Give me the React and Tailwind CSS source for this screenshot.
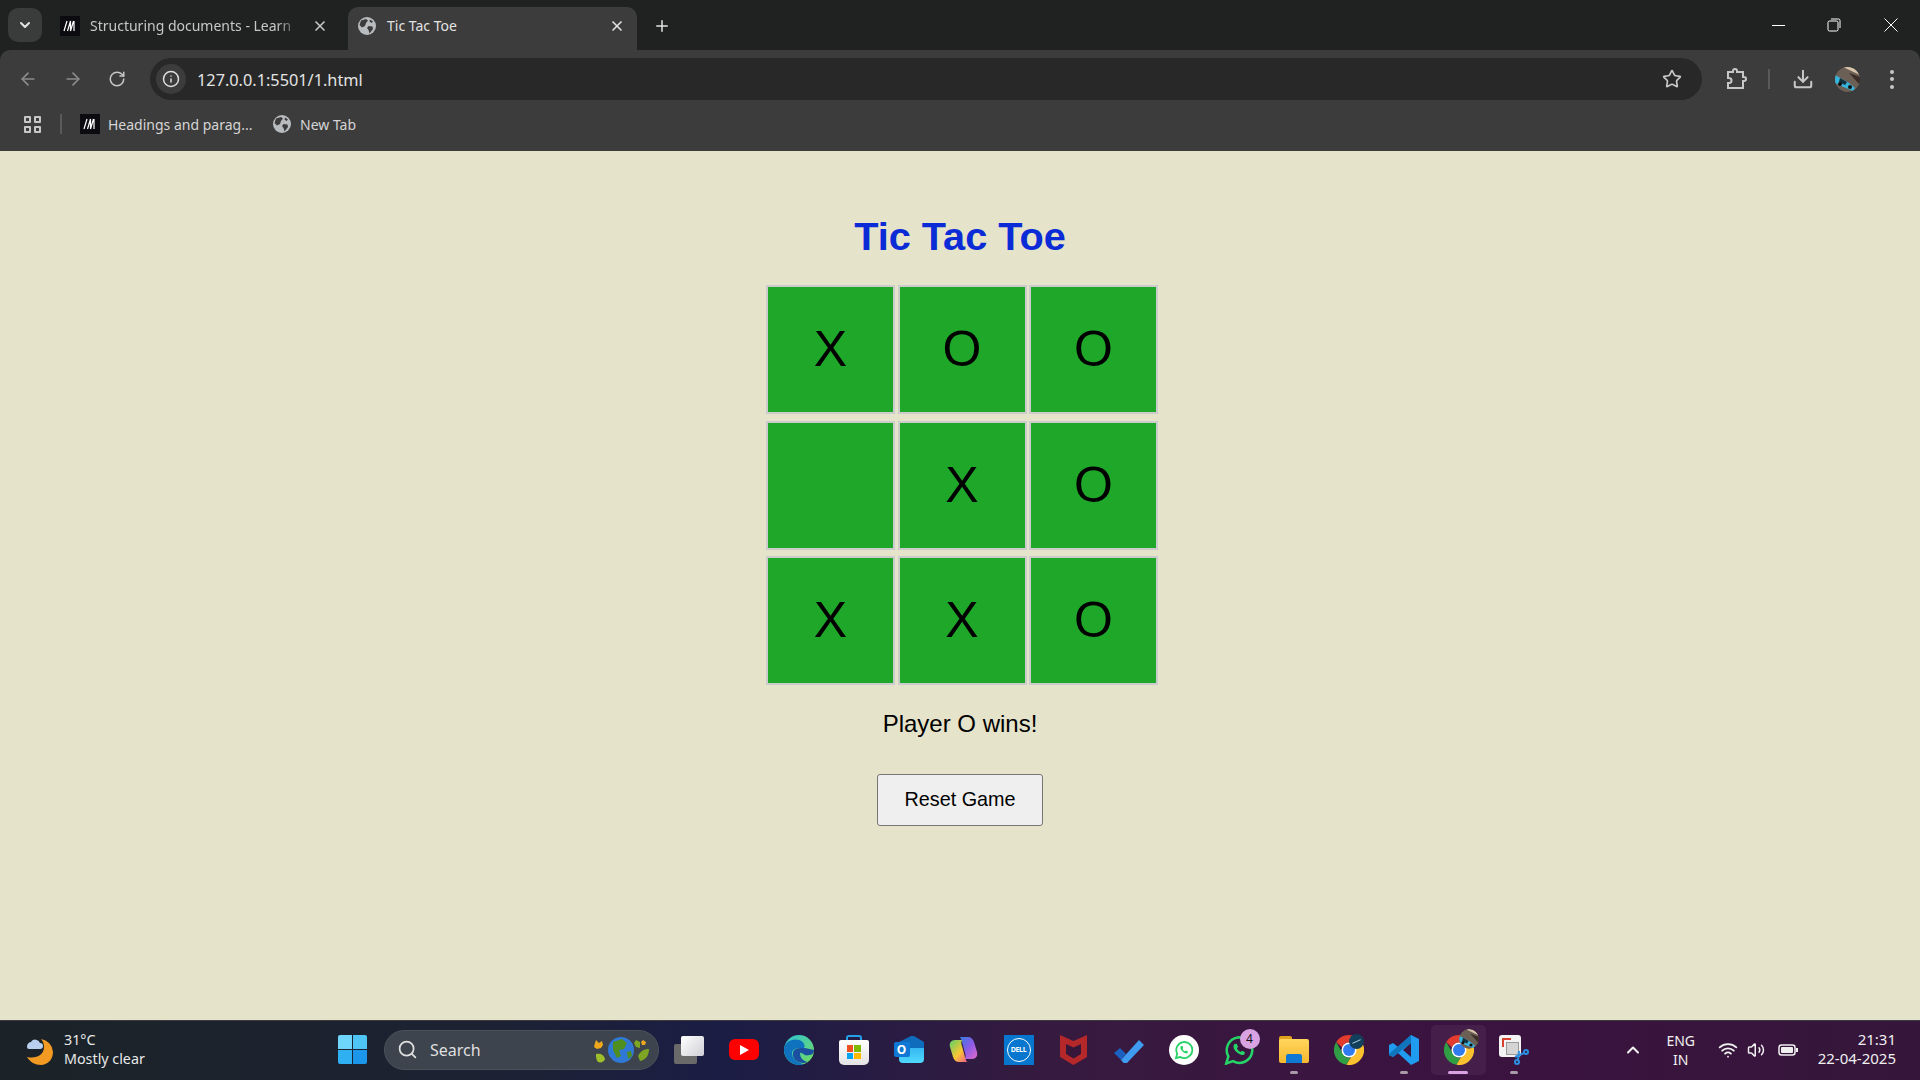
import React from 'react';
import { ArrowLeft, ArrowRight, RotateCw, Info, Star, Download, ChevronDown, ChevronUp, Plus, X, Search, Wifi, Volume2 } from 'lucide-react';

const uiFont = { fontFamily: '"Noto Sans", sans-serif' };

// favicon for mdn tabs
function MdnIcon() {
  return (
    <div className="w-[20px] h-[20px] bg-[#0b0b10] flex items-center justify-center shrink-0">
      <svg width="14" height="12" viewBox="0 0 14 12" fill="none" stroke="#fff" strokeWidth="1.2">
        <path d="M1 11 4 1M4.5 11 7.5 1V11M7.5 11 10.5 1M11 11V1" />
      </svg>
    </div>
  );
}

function GlobeIcon({ size = 18 }) {
  return (
    <svg width={size} height={size} viewBox="0 0 18 18" className="shrink-0">
      <circle cx="9" cy="9" r="9" fill="#b9bcbf" />
      <path d="M3 3.5 8 2l2 1.5-2 2.5-1 3-3 1.5-2.5-2.5zM10.5 9l4 .5.5 2.5-3.5 4.5-1-3.5-1.5-2zM12 2.5l3 2-1.5 1.5-2-1.5z" fill="#3c3c3c" />
    </svg>
  );
}

function ChromeIcon({ children }) {
  return (
    <div className="relative w-[30px] h-[30px]">
      <svg width="30" height="30" viewBox="0 0 30 30">
        <path d="M15 0a15 15 0 0 1 13 7.5H15a7.5 7.5 0 0 0-7 5L2.2 7A15 15 0 0 1 15 0z" fill="#e33b2e" />
        <path d="M2.2 7l6.500 11.500a7.500 7.500 0 0 0 8 4L12.500 29.800A15 15 0 0 1 2.200 7z" fill="#2f9e44" />
        <path d="M28 7.500A15 15 0 0 1 12.500 29.800l6.300-10.800A7.500 7.500 0 0 0 20 9z" fill="#fbc02d" />
        <circle cx="15" cy="15" r="7.500" fill="#fff" />
        <circle cx="15" cy="15" r="6" fill="#2f7bf0" />
      </svg>
      {children}
    </div>
  );
}

function AvatarPhoto({ size = 25 }) {
  return (
    <svg width={size} height={size} viewBox="0 0 25 25">
      <clipPath id={`av${size}`}><circle cx="12.500" cy="12.500" r="12.500" /></clipPath>
      <g clipPath={`url(#av${size})`}>
        <rect width="25" height="25" fill="#6c5f55" />
        <path d="M8 0h17v8z" fill="#d8c5ac" />
        <path d="M14 6l11 4v8z" fill="#3b2d28" />
        <path d="M0 8l14 8 6 5-2 3-12-5-6-3z" fill="#37b4dc" />
        <path d="M5 11l7 4-2 3-6-3z" fill="#15303d" />
        <circle cx="15" cy="20" r="2" fill="#111" />
        <circle cx="5" cy="17" r="2" fill="#111" />
      </g>
    </svg>
  );
}

function Dock({ children, dot, active }) {
  return (
    <div className={`relative w-[55px] h-[50px] flex items-center justify-center rounded-[5px] ${active ? 'bg-white/5' : ''}`}>
      {children}
      {dot && <div className="absolute bottom-[1px] left-[24px] w-[8px] h-[3px] rounded-full bg-[#a89aa8]" />}
      {active && <div className="absolute bottom-[1px] left-[17px] w-[20px] h-[3px] rounded-full bg-[#d9a3e3]" />}
    </div>
  );
}

const boardCells = ['X', 'O', 'O', '', 'X', 'O', 'X', 'X', 'O'];

export default function App() {
  return (
    <div className="w-[1920px] h-[1080px] overflow-hidden flex flex-col bg-[#202222]" style={uiFont}>
      {/* tab strip */}
      <div className="h-[50px] flex items-end shrink-0 text-[14px] text-[#e3e3e3]">
        <div className="w-[34px] h-[34px] ml-[8px] mb-[8px] rounded-[10px] bg-[#3a3b3b] flex items-center justify-center">
          <ChevronDown size={16} strokeWidth={3} />
        </div>
        <div className="w-[306px] h-[42px] flex items-center pl-[18px] pb-[7px]">
          <MdnIcon />
          <span className="ml-[10px] w-[212px] whitespace-nowrap text-[#c7c7c7] [mask-image:linear-gradient(90deg,#000_88%,transparent_100%)] text-clip overflow-x-clip">Structuring documents - Learn</span>
          <X size={16} strokeWidth={2.500} className="ml-[10px] text-[#c7c7c7]" />
        </div>
        <div className="relative w-[289px] h-[43px] rounded-t-[10px] bg-[#3c3c3c] flex items-center pl-[10px] pb-[6px]">
          <GlobeIcon />
          <span className="ml-[11px]">Tic Tac Toe</span>
          <X size={16} strokeWidth={2.500} className="ml-auto mr-[12px]" />
        </div>
        <div className="h-[43px] flex items-center ml-[16px] pb-[6px]">
          <Plus size={18} strokeWidth={2} />
        </div>
        <div className="ml-auto h-[50px] flex items-center">
          <div className="w-[56px] flex justify-center"><div className="w-[13px] h-[1px] bg-white" /></div>
          <div className="w-[56px] flex justify-center">
            <svg width="14" height="14" viewBox="0 0 14 14" fill="none" stroke="#fff"><rect x="1" y="3" width="10" height="10" rx="1.500" /><path d="M4 1h7.500A1.500 1.500 0 0 1 13 2.500V10" /></svg>
          </div>
          <div className="w-[58px] flex justify-center">
            <svg width="14" height="14" viewBox="0 0 14 14" stroke="#fff"><path d="M.5.5l13 13M13.500.5l-13 13" /></svg>
          </div>
        </div>
      </div>

      {/* address bar */}
      <div className="shrink-0 bg-[#3c3c3c] rounded-t-[10px]">
        <div className="h-[58px] flex items-center">
          <div className="w-[56px] flex justify-center text-[#8a8b8b]"><ArrowLeft size={20} /></div>
          <div className="w-[34px] flex justify-center text-[#8a8b8b]"><ArrowRight size={20} /></div>
          <div className="w-[54px] flex justify-center text-[#c7c7c7]"><RotateCw size={18} /></div>
          <div className="ml-[6px] w-[1552px] h-[42px] rounded-full bg-[#282828] flex items-center pl-[6px] pr-[20px]">
            <div className="w-[30px] h-[30px] rounded-full bg-[#3c3c3c] flex items-center justify-center text-[#dedede]"><Info size={18} /></div>
            <span className="ml-[11px] pt-[2px] text-[16.300px] text-[#e3e3e3] leading-none">127.0.0.1:5501/1.html</span>
            <Star size={20} className="ml-auto text-[#c7c7c7]" />
          </div>
          <div className="w-[66px] pl-[3px] flex justify-center text-[#c7c7c7]">
            <svg width="22" height="22" viewBox="0 0 22 22" fill="none" stroke="currentColor" strokeWidth="2"><path d="M2 4h5V3a2 2 0 0 1 4 0v1h6v5h1a2 2 0 0 1 0 4h-1v7H2v-5h1a2.500 2.500 0 0 0 0-5H2z" /></svg>
          </div>
          <div className="w-[2px] h-[20px] bg-[#5a5a5a]" />
          <div className="w-[65px] flex justify-center text-[#c7c7c7]"><Download size={22} strokeWidth={2.200} /></div>
          <div className="w-[25px] h-[25px]"><AvatarPhoto /></div>
          <div className="w-[44px] ml-[10px] flex flex-col items-center gap-[3.500px]">
            <div className="w-[4px] h-[4px] rounded-full bg-[#c7c7c7]" />
            <div className="w-[4px] h-[4px] rounded-full bg-[#c7c7c7]" />
            <div className="w-[4px] h-[4px] rounded-full bg-[#c7c7c7]" />
          </div>
        </div>

        {/* bookmarks */}
        <div className="h-[43px] pb-[11px] flex items-center text-[14px] text-[#d5d5d5]">
          <div className="ml-[24px] w-[17px] h-[17px] grid grid-cols-2 gap-[3px]">
            <div className="border-2 border-[#c7c7c7] rounded-[1px]" />
            <div className="border-2 border-[#c7c7c7] rounded-[1px]" />
            <div className="border-2 border-[#c7c7c7] rounded-[1px]" />
            <div className="border-2 border-[#c7c7c7] rounded-[1px]" />
          </div>
          <div className="ml-[19px] w-[2px] h-[20px] bg-[#5a5a5a]" />
          <div className="ml-[18px]"><MdnIcon /></div>
          <span className="ml-[8px] w-[165px] whitespace-nowrap">Headings and parag...</span>
          <GlobeIcon />
          <span className="ml-[9px] whitespace-nowrap">New Tab</span>
        </div>
      </div>

      {/* page */}
      <main className="flex-1 bg-[#e5e3ca] flex flex-col items-center" style={{ fontFamily: '"Liberation Sans", Arial, sans-serif' }}>
        <h1 className="mt-[63px] text-[39.700px] leading-[44px] font-bold text-[#0a2bd6]">Tic Tac Toe</h1>
        <div className="mt-[27px] pl-[4px] grid grid-cols-[repeat(3,129px)] auto-rows-[129px] gap-x-[2.500px] gap-y-[6.500px]">
          {boardCells.map((c, i) => (
            <div key={i} className="bg-[#1fa72a] border-2 border-[#cccccc] flex items-center justify-center text-[50px] text-black">{c}</div>
          ))}
        </div>
        <p className="mt-[25px] text-[24px] leading-[28px] text-black">Player O wins!</p>
        <button className="mt-[36px] w-[166px] h-[52px] bg-[#efefef] border border-[#767676] rounded-[3px] text-[19.800px] text-black">Reset Game</button>
      </main>

      {/* taskbar */}
      <footer className="h-[60px] shrink-0 pb-[2px] border-t border-[#3a3a40] flex items-center text-white bg-[linear-gradient(90deg,#1b2328_0%,#1c2232_25%,#1b1d45_38%,#371a3f_55%,#3b1340_75%,#35163a_100%)]">
        <div className="w-[325px] flex items-center pl-[24px]">
          <svg width="30" height="34" viewBox="0 0 30 34">
            <path d="M17 6a14 14 0 0 1 12 13c0 8-6 13-12 13-6 0-11-3-14-8 9 2 17-2 17-10 0-3-1-6-3-8z" fill="#f29a22" />
            <path d="M3 14a5 5 0 0 1 4-5 5 5 0 0 1 9 1 3 3 0 0 1 0 6H5a2 2 0 0 1-2-2z" fill="#b8d0ee" />
          </svg>
          <div className="ml-[10px] mb-[1px] text-[14.300px] leading-[19px] text-[#e8e8e8]">
            <div>31°C</div>
            <div>Mostly clear</div>
          </div>
        </div>
        <div className="w-[55px] flex justify-center">
          <div className="w-[29px] h-[29px] grid grid-cols-2 gap-[1.500px]">
            <div className="bg-[#6fd6fb] rounded-tl-[2px]" />
            <div className="bg-[#4fc5f6] rounded-tr-[2px]" />
            <div className="bg-[#2fb0f3] rounded-bl-[2px]" />
            <div className="bg-[#1c96ea] rounded-br-[2px]" />
          </div>
        </div>
        <div className="ml-[4px] w-[275px] h-[40px] rounded-full bg-[#3d444d] border border-[#4c525a] flex items-center pl-[12px] text-[#dfdfdf]">
          <Search size={21} />
          <span className="ml-[12px] text-[16px]">Search</span>
          <svg width="60" height="32" viewBox="0 0 60 32" className="ml-auto mr-[7px]">
            <circle cx="30" cy="16" r="13" fill="#2f78d6" />
            <path d="M22 8l9-3 5 4-3 6-5 1 2 6-4 2-4-8zM36 18l4-1 1 5-4 3z" fill="#4f8f1f" />
            <path d="M5 6l3 3 3-2 1 4-2 3-4 1-3-2 1-4z" fill="#f0a71c" />
            <path d="M5 20c5-1 8 1 9 5-1 3-4 4-7 3-2-2-2-5-2-8z" fill="#9fbf2a" />
            <path d="M45 6l4 2 0 6-4-1-2-4zM47 22c3-6 7-7 11-7 0 6-3 11-9 12z" fill="#7da722" />
            <path d="M52 6l3 2-1 3-3 0-1-3z" fill="#f0a71c" />
          </svg>
        </div>
        <div className="ml-[2px] flex items-center">
          <Dock>
            <div className="relative w-[30px] h-[28px]">
              <div className="absolute left-0 bottom-0 w-[23px] h-[20px] rounded-[2px] bg-[#6a6a6a]" />
              <div className="absolute right-0 top-0 w-[23px] h-[20px] rounded-[2px] bg-[linear-gradient(135deg,#fff,#cfcfd6)]" />
            </div>
          </Dock>
          <Dock>
            <div className="w-[30px] h-[21px] rounded-[6px] bg-[#f00] flex items-center justify-center">
              <svg width="10" height="10" viewBox="0 0 10 10"><path d="M1 0l9 5-9 5z" fill="#fff" /></svg>
            </div>
          </Dock>
          <Dock>
            <svg width="30" height="30" viewBox="0 0 30 30">
              <defs>
                <linearGradient id="edgeA" x1="0" y1="0" x2="1" y2="1"><stop offset="0" stopColor="#2fc2d8" /><stop offset="1" stopColor="#72dc5a" /></linearGradient>
              </defs>
              <circle cx="15" cy="15" r="15" fill="url(#edgeA)" />
              <path d="M0 15C0 7 8 3 15 5c4 1 7 5 5 8-4 0-11-1-12 5 0 5 5 10 12 11-2 1-4 1-5 1C7 30 0 23 0 15z" fill="#0f72bf" />
              <path d="M9 18c1-6 8-5 12-5l9 2c0 3-2 5-5 5-5 2-6-3-9-2 0 5 3 8 8 9-8 3-16-2-15-9z" fill="#1b4f9f" />
            </svg>
          </Dock>
          <Dock>
            <div className="relative w-[30px] h-[30px]">
              <div className="absolute left-[7px] top-0 w-[16px] h-[8px] border-2 border-b-0 border-[#24a0e8] rounded-t-[3px]" />
              <div className="absolute bottom-0 left-0 w-[30px] h-[25px] bg-[linear-gradient(180deg,#fff,#e3e3e3)] rounded-b-[5px] rounded-t-[2px] flex items-center justify-center">
                <div className="w-[14px] h-[14px] grid grid-cols-2 gap-[1px]">
                  <div className="bg-[#f25022]" /><div className="bg-[#7fba00]" /><div className="bg-[#00a4ef]" /><div className="bg-[#ffb900]" />
                </div>
              </div>
            </div>
          </Dock>
          <Dock>
            <div className="relative w-[30px] h-[27px]">
              <div className="absolute right-0 bottom-0 w-[25px] h-[22px] rounded-[4px] bg-[linear-gradient(180deg,#28a8ea_0%,#50d9ff_100%)]" />
              <svg width="25" height="12" viewBox="0 0 25 12" className="absolute right-0 top-0"><path d="M0 6 12 0h3l10 6v6H0z" fill="#0f6cbd" /></svg>
              <div className="absolute left-0 top-[6px] w-[16px] h-[15px] rounded-[2px] bg-[#0f78d4] flex items-center justify-center text-[12px] font-bold leading-none">O</div>
            </div>
          </Dock>
          <Dock>
            <svg width="29" height="25" viewBox="0 0 29 25">
              <defs>
                <linearGradient id="copA" x1="0" y1="0" x2="1" y2="1"><stop offset="0" stopColor="#2f7fe0" /><stop offset=".5" stopColor="#8a5ce8" /><stop offset="1" stopColor="#e46ac8" /></linearGradient>
                <linearGradient id="copB" x1="0" y1="0" x2="1" y2="1"><stop offset="0" stopColor="#5bd06a" /><stop offset=".55" stopColor="#f7c733" /><stop offset="1" stopColor="#f0568c" /></linearGradient>
              </defs>
              <path d="M10 0H19c3 0 5 2 6 5l3 10c1 4-1 7-5 7h-9c3 0 3-3 2-6L13 5c-.7-3-1.500-5-3-5z" fill="url(#copA)" />
              <path d="M19 25H10c-3 0-5-2-6-5L1 10c-1-4 1-7 5-7h8c-2 0-2 3-1 6l3 11c.7 3 1.500 5 3 5z" fill="url(#copB)" />
            </svg>
          </Dock>
          <Dock>
            <div className="w-[30px] h-[30px] bg-[#0676ce] flex items-center justify-center">
              <div className="w-[24px] h-[24px] rounded-full border border-white flex items-center justify-center text-[7px] font-bold leading-none tracking-tighter">DELL</div>
            </div>
          </Dock>
          <Dock>
            <svg width="27" height="30" viewBox="0 0 27 30">
              <path d="M0 0l13.500 6L27 0v22l-13.500 8L0 22z" fill="#b4282a" />
              <path d="M6 9l7.500 3.500L21 9v10l-7.500 4.500L6 19z" fill="#36173a" />
            </svg>
          </Dock>
          <Dock>
            <svg width="30" height="26" viewBox="0 0 30 26">
              <path d="M0 16l6-5 6 6-5 6z" fill="#1b5fc0" />
              <path d="M7 23L25 3l5 5-17 18c-2 1-3 1-6-3z" fill="#3f9cf0" />
            </svg>
          </Dock>
          <Dock>
            <div className="w-[30px] h-[30px] rounded-full bg-white flex items-center justify-center">
              <svg width="20" height="20" viewBox="0 0 20 20" fill="none">
                <path d="M2 18l1.200-4.300A8 8 0 1 1 6.400 17z" stroke="#25d366" strokeWidth="1.800" />
                <path d="M7 6c-1 1-1 3 1 5s4 3 5.500 2l.5-1.500-2-1-1 .8c-1-.4-2-1.400-2.400-2.400l.8-1-1-2z" fill="#25d366" />
              </svg>
            </div>
          </Dock>
          <Dock>
            <div className="relative">
              <svg width="30" height="30" viewBox="0 0 20 20" fill="none">
                <path d="M1.500 19l1.400-4.800A8.500 8.500 0 1 1 6 17.400z" stroke="#25d366" strokeWidth="1.700" />
                <path d="M7 6c-1 1-1 3 1 5s4 3 5.500 2l.5-1.500-2-1-1 .8c-1-.4-2-1.400-2.400-2.400l.8-1-1-2z" fill="#25d366" />
              </svg>
              <div className="absolute -top-[6px] -right-[6px] w-[20px] h-[20px] rounded-full bg-[#d9a3e3] text-[#111] text-[12px] flex items-center justify-center">4</div>
            </div>
          </Dock>
          <Dock dot>
            <div className="relative w-[30px] h-[27px]">
              <div className="absolute left-0 top-0 w-[13px] h-[6px] rounded-t-[2px] bg-[#e0a21a]" />
              <div className="absolute left-0 top-[3px] w-[30px] h-[24px] rounded-[2px] bg-[linear-gradient(180deg,#ffd65c,#f7b82f)]" />
              <div className="absolute left-[7px] bottom-0 w-[16px] h-[9px] rounded-t-[2px] bg-[#0f78d4]" />
            </div>
          </Dock>
          <Dock>
            <ChromeIcon>
              <div className="absolute -top-[1px] right-0 w-[15px] h-[15px] rounded-full bg-[#123f5c] flex items-center justify-center">
                <div className="w-[9px] h-[1px] bg-[#b9d8e8] -rotate-[25deg]" />
              </div>
            </ChromeIcon>
          </Dock>
          <Dock dot>
            <svg width="30" height="30" viewBox="0 0 30 30">
              <path d="M22 0l8 4v22l-8 4-13-12-5 4-4-2V10l4-2 5 4zM22 8l-8 7 8 7z" fill="#1f9cf0" />
              <path d="M22 0v8l-13 10-5 4-4-2 0-1z" fill="#0f75bd" />
            </svg>
          </Dock>
          <Dock active>
            <ChromeIcon>
              <div className="absolute -top-[6px] -right-[5px] w-[20px] h-[20px] rounded-full overflow-hidden"><AvatarPhoto size={20} /></div>
            </ChromeIcon>
          </Dock>
          <Dock dot>
            <div className="relative w-[30px] h-[30px]">
              <div className="w-[22px] h-[22px] rounded-[3px] bg-[#f3f3f3] p-[3px]">
                <div className="w-[9px] h-[9px] border-l-2 border-t-2 border-dashed border-[#d8402f]" />
              </div>
              <div className="absolute left-[7px] top-[7px] w-[13px] h-[13px] border border-[#9a9a9a] bg-[#d5d5d5]" />
              <div className="absolute right-0 bottom-0 text-[#2a8fe0]">
                <svg width="18" height="18" viewBox="0 0 18 18" fill="none" stroke="currentColor" strokeWidth="2">
                  <circle cx="15" cy="5" r="2" /><circle cx="6" cy="15" r="2" /><path d="M13 6 4 10M7 13l1-9" />
                </svg>
              </div>
            </div>
          </Dock>
        </div>

        {/* system tray */}
        <div className="ml-auto flex items-center text-[#f0f0f0]">
          <ChevronUp size={20} strokeWidth={2.500} />
          <div className="ml-[23px] w-[30px] text-center text-[14px] leading-[19px]"><div>ENG</div><div>IN</div></div>
          <Wifi size={20} strokeWidth={2.200} className="ml-[22px]" />
          <Volume2 size={18} className="ml-[9px]" />
          <svg width="20" height="12" viewBox="0 0 20 12" className="ml-[13px]"><rect x="1" y="1" width="16" height="10" rx="2.500" fill="none" stroke="#f0f0f0" strokeWidth="1.500" /><rect x="3" y="3" width="12" height="6" rx="1" fill="#f0f0f0" /><rect x="18" y="4" width="2" height="4" fill="#f0f0f0" /></svg>
          <div className="ml-[20px] mr-[24px] mb-[1px] text-right text-[15px] leading-[19px]"><div>21:31</div><div>22-04-2025</div></div>
        </div>
      </footer>
    </div>
  );
}
